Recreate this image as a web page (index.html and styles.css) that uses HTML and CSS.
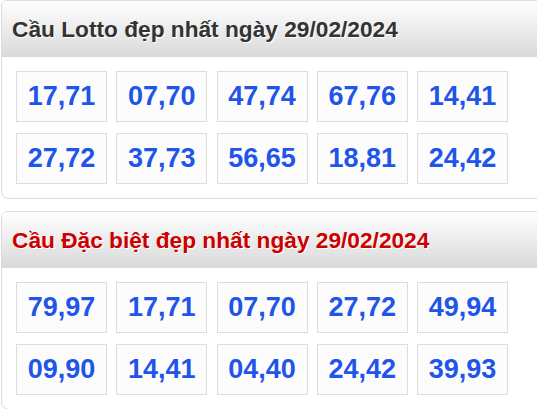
FILE: index.html
```html
<!DOCTYPE html>
<html lang="vi">
<head>
  <meta charset="UTF-8">
  <title>Cầu Lotto đẹp nhất</title>
  <link rel="stylesheet" href="styles.css">
</head>
<body>
  <div class="card">
    <h2 class="card-title">Cầu Lotto đẹp nhất ngày 29/02/2024</h2>
    <div class="numbers">
      <span>17,71</span>
      <span>07,70</span>
      <span>47,74</span>
      <span>67,76</span>
      <span>14,41</span>
      <span>27,72</span>
      <span>37,73</span>
      <span>56,65</span>
      <span>18,81</span>
      <span>24,42</span>
    </div>
  </div>

  <div class="card">
    <h2 class="card-title red">Cầu Đặc biệt đẹp nhất ngày 29/02/2024</h2>
    <div class="numbers">
      <span>79,97</span>
      <span>17,71</span>
      <span>07,70</span>
      <span>27,72</span>
      <span>49,94</span>
      <span>09,90</span>
      <span>14,41</span>
      <span>04,40</span>
      <span>24,42</span>
      <span>39,93</span>
    </div>
  </div>
</body>
</html>
```

FILE: styles.css
```css
body {
  margin: 0 0 0 1px;
  background: #fff;
  font-family: "Liberation Sans", Arial, sans-serif;
  overflow: hidden;
}

.card {
  width: 560px;
  border: 1px solid #ddd;
  border-radius: 6px 0 0 8px;
  margin-bottom: 12px;
  overflow: hidden;
}

.card-title {
  margin: 0;
  height: 56px;
  line-height: 56px;
  padding-left: 10px;
  font-size: 22.7px;
  font-weight: bold;
  color: #333;
  text-shadow: 1px 1px 0 #fff;
  background: linear-gradient(#fff, #d9d9d9);
}

.card-title.red {
  color: #cc0000;
}

.numbers {
  display: grid;
  grid-template-columns: repeat(5, 91px);
  column-gap: 9.25px;
  row-gap: 11px;
  padding: 14px 0 14px 14px;
}

.numbers span {
  height: 49px;
  line-height: 49px;
  text-align: center;
  border: 1px solid #ddd;
  background: #fcfcfd;
  color: #1f55e8;
  font-size: 27px;
  font-weight: bold;
}
```
